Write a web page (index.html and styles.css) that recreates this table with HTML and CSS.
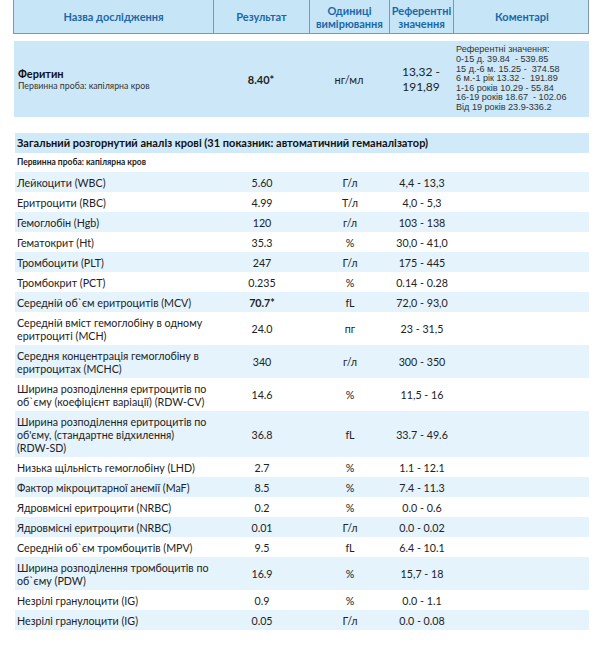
FILE: index.html
```html
<!DOCTYPE html>
<html lang="uk">
<head>
<meta charset="utf-8">
<title>Результати аналізів</title>
<link rel="stylesheet" href="styles.css">
</head>
<body>
<div class="report">
  <div class="thead grid">
    <div class="th">Назва дослідження</div>
    <div class="th">Результат</div>
    <div class="th">Одиниці<br>вимірювання</div>
    <div class="th">Референтні<br>значення</div>
    <div class="th">Коментарі</div>
  </div>

  <div class="ferritin grid">
    <div class="cell name">
      <div class="fname">Феритин</div>
      <div class="fsample">Первинна проба: капілярна кров</div>
    </div>
    <div class="cell c bold">8.40*</div>
    <div class="cell c">нг/мл</div>
    <div class="cell c fref">13,32 -<br>191,89</div>
    <div class="cell comment">Референтні значення:<br>0-15 д. 39.84&nbsp; - 539.85<br>15 д.-6 м. 15.25 -&nbsp; 374.58<br>6 м.-1 рік 13.32 -&nbsp; 191.89<br>1-16 років 10.29 - 55.84<br>16-19 років 18.67&nbsp; - 102.06<br>Від 19 років 23.9-336.2</div>
  </div>

  <div class="section-title">Загальний розгорнутий аналіз крові (31 показник: автоматичний геманалізатор)</div>
  <div class="sample">Первинна проба: капілярна кров</div>

  <div class="row grid alt"><div class="cell">Лейкоцити (WBC)</div><div class="cell c">5.60</div><div class="cell c">Г/л</div><div class="cell c">4,4 - 13,3</div><div class="cell"></div></div>
  <div class="row grid"><div class="cell">Еритроцити (RBC)</div><div class="cell c">4.99</div><div class="cell c">Т/л</div><div class="cell c">4,0 - 5,3</div><div class="cell"></div></div>
  <div class="row grid alt"><div class="cell">Гемоглобін (Hgb)</div><div class="cell c">120</div><div class="cell c">г/л</div><div class="cell c">103 - 138</div><div class="cell"></div></div>
  <div class="row grid"><div class="cell">Гематокрит (Ht)</div><div class="cell c">35.3</div><div class="cell c">%</div><div class="cell c">30,0 - 41,0</div><div class="cell"></div></div>
  <div class="row grid alt"><div class="cell">Тромбоцити (PLT)</div><div class="cell c">247</div><div class="cell c">Г/л</div><div class="cell c">175 - 445</div><div class="cell"></div></div>
  <div class="row grid"><div class="cell">Тромбокрит (PCT)</div><div class="cell c">0.235</div><div class="cell c">%</div><div class="cell c">0.14 - 0.28</div><div class="cell"></div></div>
  <div class="row grid alt"><div class="cell">Середній об`єм еритроцитів (MCV)</div><div class="cell c bold">70.7*</div><div class="cell c">fL</div><div class="cell c">72,0 - 93,0</div><div class="cell"></div></div>
  <div class="row grid"><div class="cell">Середній вміст гемоглобіну в одному еритроциті (MCH)</div><div class="cell c">24.0</div><div class="cell c">пг</div><div class="cell c">23 - 31,5</div><div class="cell"></div></div>
  <div class="row grid alt"><div class="cell">Середня концентрація гемоглобіну в еритроцитах (MCHC)</div><div class="cell c">340</div><div class="cell c">г/л</div><div class="cell c">300 - 350</div><div class="cell"></div></div>
  <div class="row grid"><div class="cell">Ширина розподілення еритроцитів по об`єму (коефіцієнт варіації) (RDW-CV)</div><div class="cell c">14.6</div><div class="cell c">%</div><div class="cell c">11,5 - 16</div><div class="cell"></div></div>
  <div class="row grid alt"><div class="cell"><span>Ширина розподілення еритроцитів по об'єму, (стандартне відхилення) <span class="nw">(RDW-SD)</span></span></div><div class="cell c">36.8</div><div class="cell c">fL</div><div class="cell c">33.7 - 49.6</div><div class="cell"></div></div>
  <div class="row grid"><div class="cell">Низька щільність гемоглобіну (LHD)</div><div class="cell c">2.7</div><div class="cell c">%</div><div class="cell c">1.1 - 12.1</div><div class="cell"></div></div>
  <div class="row grid alt"><div class="cell">Фактор мікроцитарної анемії (MaF)</div><div class="cell c">8.5</div><div class="cell c">%</div><div class="cell c">7.4 - 11.3</div><div class="cell"></div></div>
  <div class="row grid"><div class="cell">Ядровмісні еритроцити (NRBC)</div><div class="cell c">0.2</div><div class="cell c">%</div><div class="cell c">0.0 - 0.6</div><div class="cell"></div></div>
  <div class="row grid alt"><div class="cell">Ядровмісні еритроцити (NRBC)</div><div class="cell c">0.01</div><div class="cell c">Г/л</div><div class="cell c">0.0 - 0.02</div><div class="cell"></div></div>
  <div class="row grid"><div class="cell">Середній об`єм тромбоцитів (MPV)</div><div class="cell c">9.5</div><div class="cell c">fL</div><div class="cell c">6.4 - 10.1</div><div class="cell"></div></div>
  <div class="row grid alt"><div class="cell">Ширина розподілення тромбоцитів по об`єму (PDW)</div><div class="cell c">16.9</div><div class="cell c">%</div><div class="cell c">15,7 - 18</div><div class="cell"></div></div>
  <div class="row grid"><div class="cell">Незрілі гранулоцити (IG)</div><div class="cell c">0.9</div><div class="cell c">%</div><div class="cell c">0.0 - 1.1</div><div class="cell"></div></div>
  <div class="row grid alt"><div class="cell">Незрілі гранулоцити (IG)</div><div class="cell c">0.05</div><div class="cell c">Г/л</div><div class="cell c">0.0 - 0.08</div><div class="cell"></div></div>
</div>
</body>
</html>
```

FILE: styles.css
```css
* { box-sizing: border-box; }
html, body { margin: 0; padding: 0; background: #fff; }
body {
  font-family: Lato, "Open Sans", sans-serif;
  color: #222;
}
.report {
  width: 576px;
  margin-left: 13px;
}
.grid {
  display: grid;
  grid-template-columns: 199px 96px 80px 64px 137px;
}
.thead {
  background: #c6e6f8;
  border-left: 1px solid #7f99ab;
  border-right: 1px solid #7f99ab;
  border-bottom: 1px solid #7f99ab;
  height: 34px;
}
.th {
  display: flex;
  align-items: center;
  justify-content: center;
  text-align: center;
  font-weight: 700;
  font-size: 11px;
  line-height: 13px;
  color: #1d66a8;
  border-left: 1px solid #7f99ab;
}
.th:first-child { border-left: 0; }

.ferritin {
  margin-top: 7px;
  background: #cce8f8;
  height: 76px;
  margin-left: 1px;
}
.cell {
  display: flex;
  align-items: center;
  font-size: 10.7px;
  line-height: 13px;
  padding: 3.5px 3px;
}
.cell.c { justify-content: center; text-align: center; }
.nw { white-space: nowrap; }
.bold { font-weight: 700; }
.ferritin .cell { font-size: 11px; }
.ferritin .name {
  flex-direction: column;
  align-items: flex-start;
  justify-content: center;
  padding-left: 4px;
}
.fname { font-weight: 700; font-size: 11px; line-height: 12px; color: #111; }
.fsample { font-size: 8.8px; line-height: 11px; color: #333; }
.ferritin .fref { font-size: 12px; line-height: 15px; }
.ferritin .comment {
  font-family: "Liberation Sans", Arial, sans-serif;
  font-size: 9.1px;
  line-height: 9.6px;
  padding-left: 3px;
  color: #333;
}

.section-title {
  margin-top: 16px;
  margin-left: 2px;
  background: #d0eaf9;
  height: 20px;
  padding-left: 2px;
  font-weight: 700;
  font-size: 11px;
  line-height: 20px;
  color: #111;
  white-space: nowrap;
}
.sample {
  margin-left: 2px;
  padding-left: 2px;
  height: 19px;
  font-weight: 700;
  font-size: 8.5px;
  line-height: 19px;
  color: #222;
}
.row {
  margin-left: 2px;
  min-height: 20px;
}
.row .cell:first-child { padding-left: 2px; padding-right: 0; }
.row.alt { background: #e5f3fc; }
```
